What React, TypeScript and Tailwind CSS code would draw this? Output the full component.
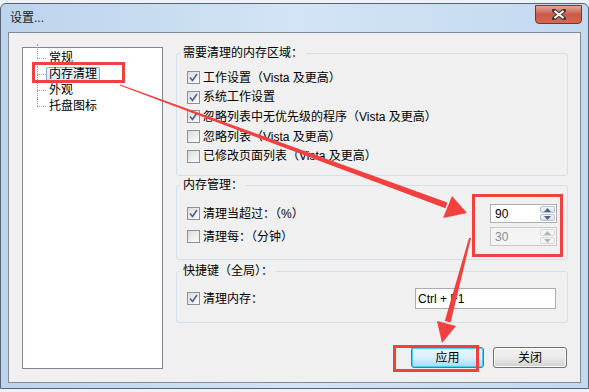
import type { ReactNode } from 'react';

const font = "font-['Liberation_Sans','Noto_Sans_CJK_SC',sans-serif]";

function CheckBox({ checked }: { checked: boolean }) {
  return (
    <span className="flex h-[13px] w-[13px] shrink-0 items-center justify-center border border-[#8e8f8f] bg-gradient-to-br from-[#dcdcdc] to-[#fbfbfb]">
      {checked && (
        <svg width="9" height="9" viewBox="0 0 9 9">
          <path d="M1 4.5 L3.5 7.5 L8 1" fill="none" stroke="#4a5f97" strokeWidth="1.6" />
        </svg>
      )}
    </span>
  );
}

function CheckRow({ checked, children, className = 'h-[19.6px]' }: { checked: boolean; children: ReactNode; className?: string }) {
  return (
    <div className={`flex items-center ${className}`}>
      <CheckBox checked={checked} />
      <span className="ml-[3px] whitespace-nowrap leading-none">{children}</span>
    </div>
  );
}

function Group({ title, className, children }: { title: string; className: string; children: ReactNode }) {
  return (
    <fieldset className={`rounded-[3px] border border-[#d5dfe5] ${className}`}>
      <legend className="ml-[3px] h-[14px] px-[3px] leading-[14px]">{title}</legend>
      {children}
    </fieldset>
  );
}

function Spinner({ value, disabled }: { value: string; disabled?: boolean }) {
  const tri = disabled ? '#b4b4b4' : '#4d6185';
  return (
    <div className={`flex h-[19px] w-[67px] border ${disabled ? 'border-[#c8c8c8] bg-[#f4f4f4] text-[#8d8d8d]' : 'border-[#abadb3] bg-white'}`}>
      <div className="flex flex-1 items-center pl-[4px] leading-none">{value}</div>
      <div className="flex w-[17px] flex-col gap-px p-px">
        {[0, 1].map(i => (
          <div
            key={i}
            className={`flex flex-1 items-center justify-center rounded-[2px] border ${disabled ? 'border-[#dadada] bg-[#f4f4f4]' : 'border-[#b7c3d3] bg-gradient-to-b from-[#f2f5f9] to-[#d9e1ea]'}`}
          >
            <svg width="7" height="4" viewBox="0 0 7 4">
              <path d={i === 0 ? 'M0 4 L3.5 0 L7 4 Z' : 'M0 0 L3.5 4 L7 0 Z'} fill={tri} />
            </svg>
          </div>
        ))}
      </div>
    </div>
  );
}

const treeItems = ['常规', '内存清理', '外观', '托盘图标'];

export default function App() {
  return (
    <div className={`relative h-[392px] w-[589px] overflow-hidden bg-[#eef1f5] pt-[3px] text-[12px] text-black ${font}`}>
      <div className="flex h-[386px] w-[589px] flex-col rounded-t-[6px] border border-[#566477] bg-gradient-to-r from-[#bcd4ec] via-[#d3e4f6] to-[#c3d9f0]">
        {/* title bar */}
        <div className="flex h-[28px] items-start justify-between">
          <span className="ml-[9px] mt-[8px] leading-none text-[#1b1b1b]">设置...</span>
          <div className="mr-[6px] mt-[1px] flex h-[19px] w-[47px] items-center justify-center rounded-b-[4px] border border-[#6b3a35] bg-gradient-to-b from-[#e6a698] via-[#c85a49] to-[#d8674e]">
            <svg width="14" height="11" viewBox="0 0 14 11">
              <path d="M2 1.5 L12 9.5 M12 1.5 L2 9.5" stroke="#3b3b3b" strokeWidth="4" strokeLinecap="square" />
              <path d="M2.5 2 L11.5 9 M11.5 2 L2.5 9" stroke="#ffffff" strokeWidth="2" />
            </svg>
          </div>
        </div>

        {/* client area */}
        <div className="mx-[7px] flex h-[351px] border border-[#838b97] bg-[#f0f0f0] pl-[13px] pr-[12px]">
          {/* tree */}
          <div className="mt-[14px] h-[322px] w-[141px] border border-[#828790] bg-white pl-[14px] pt-[2px]">
            {treeItems.map((item, i) => (
              <div key={item} className="flex h-4 items-center">
                <div className="relative h-4 w-[9px] shrink-0">
                  <div
                    className={`absolute left-0 border-l border-dotted border-[#9a9a9a] ${
                      i === 0 ? '-top-[6px] h-[14px]' : i === treeItems.length - 1 ? 'top-0 h-1/2' : 'top-0 h-full'
                    }`}
                  />
                  <div className="absolute left-0 top-1/2 w-full border-t border-dotted border-[#9a9a9a]" />
                </div>
                <span
                  className={`h-[15px] rounded-[2px] border px-[2px] leading-[13px] ${
                    i === 1 ? 'border-[#84acdd] bg-gradient-to-b from-[#f1f7fe] to-[#d5e7fc]' : 'border-transparent'
                  }`}
                >
                  {item}
                </span>
              </div>
            ))}
          </div>

          {/* right column */}
          <div className="ml-[13px] mt-[13px] flex flex-1 flex-col">
            <Group title="需要清理的内存区域：" className="h-[130px]">
              <div className="px-[10px] pt-[8px]">
                <CheckRow checked>工作设置（Vista 及更高）</CheckRow>
                <CheckRow checked>系统工作设置</CheckRow>
                <CheckRow checked>忽略列表中无优先级的程序（Vista 及更高）</CheckRow>
                <CheckRow checked={false}>忽略列表（Vista 及更高）</CheckRow>
                <CheckRow checked={false}>已修改页面列表（Vista 及更高）</CheckRow>
              </div>
            </Group>

            <Group title="内存管理：" className="mt-[2px] h-[82px]">
              <div className="pl-[10px] pr-[10px] pt-[10px]">
                <div className="flex h-[23px] items-center justify-between">
                  <CheckRow checked className="">清理当超过：（%）</CheckRow>
                  <Spinner value="90" />
                </div>
                <div className="flex h-[23px] items-center justify-between">
                  <CheckRow checked={false} className="">清理每：（分钟）</CheckRow>
                  <Spinner value="30" disabled />
                </div>
              </div>
            </Group>

            <Group title="快捷键（全局）：" className="mt-[4px] h-[59px]">
              <div className="flex h-[21px] items-center justify-between pl-[10px] pr-[11px] mt-[10px]">
                <CheckRow checked className="">清理内存：</CheckRow>
                <div className="flex h-[21px] w-[141px] items-center border border-[#abadb3] bg-white pl-[2px] leading-none">
                  Ctrl + F1
                </div>
              </div>
            </Group>

            <div className="mt-[24px] flex justify-end gap-[9px] pr-px">
              <button className="h-[21px] w-[73px] rounded-[3px] border border-[#3c7fb1] bg-gradient-to-b from-[#eaf6fd] via-[#d9f0fc] to-[#a7d9f5] shadow-[inset_0_0_0_1px_#48d0f6]">
                应用
              </button>
              <button className="h-[21px] w-[74px] rounded-[3px] border border-[#707070] bg-gradient-to-b from-[#f2f2f2] via-[#ebebeb] to-[#cfcfcf] shadow-[inset_0_0_0_1px_#fcfcfc]">
                关闭
              </button>
            </div>
          </div>
        </div>
      </div>

      {/* annotations drawn over the screenshot */}
      <svg className="pointer-events-none absolute left-0 top-0" width="589" height="392" viewBox="0 0 589 392">
        <g fill="none" stroke="#f2403f" strokeWidth="3">
          <rect x="33.5" y="63.5" width="90" height="18" />
          <rect x="473.5" y="195.5" width="88" height="60" />
          <rect x="394.5" y="346.5" width="83" height="24" />
        </g>
        <g fill="#f2403f">
          <polygon points="119.8,85.6 120.2,84.4 447.4,202.6 445.4,208.2" />
          <polygon points="443,218 452,196 467,213" />
          <polygon points="469,238 471,238 450.6,322.5 444.8,321" />
          <polygon points="437,321 456,326 442,343" />
        </g>
      </svg>
    </div>
  );
}
